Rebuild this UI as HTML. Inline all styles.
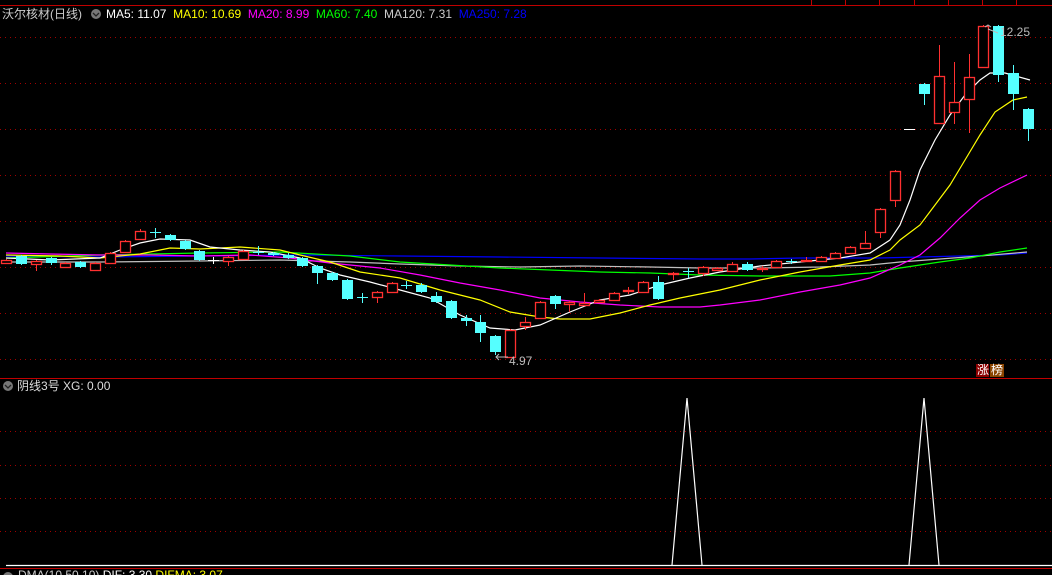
<!DOCTYPE html>
<html><head><meta charset="utf-8"><style>
html,body{margin:0;padding:0;background:#000;overflow:hidden}
body{width:1052px;height:575px;position:relative;font-family:"Liberation Sans","Noto Sans CJK SC",sans-serif}
.t{position:absolute;font-size:12px;white-space:nowrap;line-height:14px}
</style></head><body>
<svg width="1052" height="575" style="position:absolute;left:0;top:0" xmlns="http://www.w3.org/2000/svg">
<g stroke="#c00000" stroke-width="1">
<line x1="0" y1="5.5" x2="1052" y2="5.5"/>
<line x1="811.5" y1="0" x2="811.5" y2="5"/><line x1="845.5" y1="0" x2="845.5" y2="5"/><line x1="879.5" y1="0" x2="879.5" y2="5"/><line x1="914.5" y1="0" x2="914.5" y2="5"/><line x1="948.5" y1="0" x2="948.5" y2="5"/><line x1="982.5" y1="0" x2="982.5" y2="5"/><line x1="1016.5" y1="0" x2="1016.5" y2="5"/>
<line x1="0" y1="378.5" x2="1052" y2="378.5"/>
<line x1="0" y1="568.5" x2="1052" y2="568.5"/>
</g>
<g stroke="#a00000" stroke-width="1" stroke-dasharray="1,4">
<line x1="0" y1="37.5" x2="1052" y2="37.5"/><line x1="0" y1="83.5" x2="1052" y2="83.5"/><line x1="0" y1="129.5" x2="1052" y2="129.5"/><line x1="0" y1="175.5" x2="1052" y2="175.5"/><line x1="0" y1="221.5" x2="1052" y2="221.5"/><line x1="0" y1="267.5" x2="1052" y2="267.5"/><line x1="0" y1="313.5" x2="1052" y2="313.5"/><line x1="0" y1="359.5" x2="1052" y2="359.5"/>
<line x1="0" y1="431.5" x2="1052" y2="431.5"/><line x1="0" y1="465.5" x2="1052" y2="465.5"/><line x1="0" y1="498.5" x2="1052" y2="498.5"/><line x1="0" y1="531.5" x2="1052" y2="531.5"/>
</g>
<g fill="none" stroke-width="1.2">
<polyline stroke="#0000ff" points="6,256 100,257 200,256 300,255 400,256 500,257 600,258 700,259 750,259 800,258 880,258 920,257 960,256 1000,255 1027,253"/>
<polyline stroke="#c0c0c0" points="6,262 100,262 200,261 280,260 350,262 400,264 460,266 520,267 580,266 650,267 700,268 760,268 820,267 870,265 900,262 940,259 980,256 1027,252"/>
<polyline stroke="#00ff00" points="6,258 100,255 200,253 280,252 350,256 400,262 450,265 500,268 550,270 600,272 650,273 700,275 760,276 830,276 870,273 900,268 940,262 970,258 1000,252 1027,248"/>
<polyline stroke="#ff00ff" points="6,253 50,254 100,255 150,255 200,256 250,255 290,258 330,263 380,268 420,275 460,283 500,290 540,298 580,302 620,305 660,307 700,307 720,305 760,300 800,292 840,285 870,278 900,265 920,255 940,238 960,218 980,200 1000,188 1027,175"/>
<polyline stroke="#ffff00" points="6,255 60,256 100,258 140,254 170,248 200,249 240,247 280,250 300,255 330,262 360,272 400,278 440,290 480,300 510,312 540,317 560,319 590,319 620,313 650,305 680,298 720,290 760,280 800,272 840,265 870,260 890,250 900,240 920,225 935,205 950,185 965,160 980,135 995,112 1013,100 1027,97"/>
<polyline stroke="#ffffff" points="6,258 50,260 100,258 120,250 140,243 160,239 190,240 210,247 240,250 270,252 300,258 320,268 340,275 370,282 400,290 430,298 460,315 490,328 515,330 540,325 570,312 600,300 630,295 660,285 690,278 720,272 760,266 800,262 840,258 870,253 890,240 900,225 910,200 920,170 935,140 950,115 965,95 980,80 990,73 1005,73 1030,80"/>
</g>
<g id="c"></g>
<g fill="none" stroke="#fff" stroke-width="1.2">
<line x1="6" y1="565.5" x2="1052" y2="565.5"/>
<polyline points="672,565 687,398 702,565"/>
<polyline points="909,565 924,398 939,565"/>
</g>
<g stroke="#bbb" stroke-width="1" fill="none">
<line x1="496" y1="357" x2="508" y2="357"/><polyline points="499,354 496,357 499,360"/>
<line x1="988" y1="29" x2="998" y2="33"/><polyline points="985,27 988,25 991,27"/>
</g>
<circle cx="96" cy="14" r="5" fill="#777"/><polyline points="93,13 96,16 99,13" fill="none" stroke="#222" stroke-width="1.3"/>
<circle cx="8" cy="386" r="5" fill="#777"/><polyline points="5,385 8,388 11,385" fill="none" stroke="#222" stroke-width="1.3"/>
<circle cx="8" cy="577" r="5" fill="#777"/>
<rect x="976" y="364" width="13" height="13" fill="#8b0000"/><rect x="990" y="364" width="14" height="13" fill="#8b4500"/>
</svg>
<div class="t" style="left:2px;top:7px;color:#ccc">沃尔核材(日线)</div>
<div class="t" style="left:106px;top:7px"><span style="color:#fff">MA5: 11.07</span>&nbsp; <span style="color:#ff0">MA10: 10.69</span>&nbsp; <span style="color:#f0f">MA20: 8.99</span>&nbsp; <span style="color:#0f0">MA60: 7.40</span>&nbsp; <span style="color:#ccc">MA120: 7.31</span>&nbsp; <span style="color:#00f">MA250: 7.28</span></div>
<div class="t" style="left:1000px;top:25px;color:#bbb">12.25</div>
<div class="t" style="left:509px;top:354px;color:#bbb">4.97</div>
<div class="t" style="left:17px;top:379px;color:#ddd">阴线3号 XG: 0.00</div>
<div class="t" style="left:18px;top:568px;color:#ccc">DMA(10,50,10) <span style="color:#fff">DIF: 3.30</span> <span style="color:#ff0">DIFMA: 3.07</span></div>
<div class="t" style="left:977px;top:363px;color:#fff;font-size:12px">涨</div>
<div class="t" style="left:991px;top:363px;color:#fff;font-size:12px">榜</div>
<script>
var d=[[6,'r',260,263,259,264],[21,'c',256,264,255,265],[36,'r',261,264,260,271],[51,'c',258,263,257,265],[65,'r',263,267,262,268],[80,'c',262,267,261,268],[95,'r',263,270,262,271],[110,'r',253,263,252,264],[125,'r',241,252,240,253],[140,'r',231,239,229,240],[155,'c',232,233,228,238],[170,'c',235,240,234,241],[185,'c',241,249,240,250],[199,'c',251,260,250,261],[213,'w',260,261,257,264],[228,'r',257,261,256,266],[243,'r',251,259,250,260],[258,'c',252,253,246,255],[273,'c',253,255,252,256],[288,'c',255,258,253,259],[302,'c',258,266,257,267],[317,'c',266,273,265,284],[332,'c',273,280,272,281],[347,'c',280,299,279,300],[362,'c',297,298,293,303],[377,'r',292,297,291,303],[392,'r',283,292,282,293],[406,'c',285,286,281,289],[421,'c',285,292,283,293],[436,'c',296,302,292,303],[451,'c',301,318,300,319],[466,'c',318,321,315,326],[480,'c',322,333,315,342],[495,'c',336,352,335,355],[510,'r',330,357,329,358],[525,'r',322,326,317,330],[540,'r',302,318,301,319],[555,'c',296,304,295,309],[569,'r',302,304,301,312],[584,'r',303,305,293,306],[599,'r',300,302,299,303],[614,'r',293,300,292,301],[628,'r',290,291,287,294],[643,'r',282,292,281,293],[658,'c',282,299,276,300],[673,'r',273,274,272,280],[688,'c',271,272,268,278],[703,'r',267,273,266,276],[717,'r',268,270,267,271],[732,'r',264,271,262,272],[747,'c',264,270,262,271],[762,'r',268,269,266,272],[776,'r',261,267,260,268],[791,'c',261,262,259,264],[806,'r',260,261,257,262],[821,'r',257,261,256,262],[835,'r',253,258,252,259],[850,'r',247,253,246,254],[865,'r',243,248,231,249],[880,'r',209,232,208,238],[895,'r',171,200,170,207],[909,'w',129,130,129,130],[924,'c',84,94,83,105],[939,'r',76,123,45,124],[954,'r',102,112,62,124],[969,'r',77,99,54,133],[983,'r',26,67,25,68],[998,'c',26,75,25,82],[1013,'c',73,94,65,110],[1028,'c',109,129,108,141]];
var s='';d.forEach(function(a){var x=a[0],t=a[1],o=a[2],c=a[3],h=a[4],l=a[5];
var col=t=='r'?'#ff3030':(t=='c'?'#55ffff':'#fff');
s+='<line x1="'+(x+.5)+'" y1="'+h+'" x2="'+(x+.5)+'" y2="'+l+'" stroke="'+col+'"/>';
var hh=Math.max(c-o,1);
if(t=='r')s+='<rect x="'+(x-5+.5)+'" y="'+(o+.5)+'" width="10" height="'+hh+'" fill="#000" stroke="'+col+'" stroke-width="1.3"/>';
else s+='<rect x="'+(x-5)+'" y="'+o+'" width="11" height="'+hh+'" fill="'+col+'"/>';});
document.getElementById('c').innerHTML=s;
</script>
</body></html>
